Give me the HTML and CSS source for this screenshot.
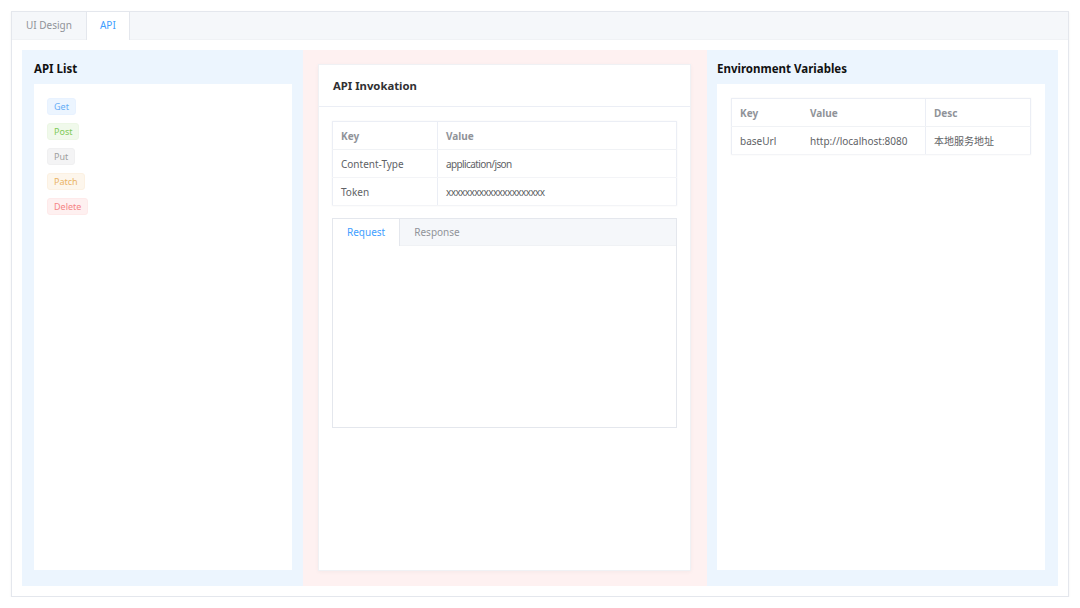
FILE: index.html
```html
<!DOCTYPE html>
<html lang="en">
<head>
    <meta charset="UTF-8">
    <title>API</title>
    <link rel="stylesheet" href="styles.css">
</head>
<body>
    <div class="tabs-card">
        <div class="tabs-header">
            <div class="tab">UI Design</div>
            <div class="tab active">API</div>
        </div>
        <div class="tabs-content">
            <div class="panel panel-list">
                <h3>API List</h3>
                <div class="box">
                    <span class="tag tag-blue">Get</span>
                    <span class="tag tag-green">Post</span>
                    <span class="tag tag-grey">Put</span>
                    <span class="tag tag-orange">Patch</span>
                    <span class="tag tag-red">Delete</span>
                </div>
            </div>
            <div class="panel panel-invoke">
                <div class="card">
                    <div class="card-header">API Invokation</div>
                    <div class="card-body">
                        <table class="grid headers">
                            <tr><th>Key</th><th>Value</th></tr>
                            <tr><td>Content-Type</td><td>application/json</td></tr>
                            <tr><td>Token</td><td>xxxxxxxxxxxxxxxxxxxxx</td></tr>
                        </table>
                        <div class="sub-tabs">
                            <div class="sub-tabs-header">
                                <div class="sub-tab active">Request</div>
                                <div class="sub-tab">Response</div>
                            </div>
                            <div class="sub-tabs-body"></div>
                        </div>
                    </div>
                </div>
            </div>
            <div class="panel panel-env">
                <h3>Environment Variables</h3>
                <div class="box">
                    <table class="grid env">
                        <tr><th>Key</th><th>Value</th><th class="sep">Desc</th></tr>
                        <tr><td>baseUrl</td><td>http://localhost:8080</td><td class="sep">本地服务地址</td></tr>
                    </table>
                </div>
            </div>
        </div>
    </div>
</body>
</html>
```

FILE: styles.css
```css
body { margin: 0; background: #fff; font-family: "Noto Sans", "Noto Sans CJK SC", sans-serif; color: #606266; }
.tabs-card { margin: 11px 0 0 11px; width: 1056px; height: 584px; border: 1px solid #e4e7ed; box-shadow: 0 1px 2px rgba(0,0,0,0.06); display: flex; flex-direction: column; }
.tabs-header { display: flex; height: 27px; background: #f5f7fa; border-bottom: 1px solid #f0f2f5; }
.tab { padding: 0 14px; font-size: 10px; line-height: 27px; color: #909399; }
.tab.active { background: #fff; color: #409eff; border-left: 1px solid #e4e7ed; border-right: 1px solid #e4e7ed; padding: 0 13px; height: 28px; }
.tabs-content { flex: 1; padding: 10px 11px 10px 10px; display: grid; grid-template-columns: 281px 404px 351px; }
.panel { display: flex; flex-direction: column; }
.panel h3 { margin: 0 0 6px; font-size: 11.5px; line-height: 18px; color: #111; font-weight: bold; }
.panel-list { background: #ecf5fe; padding: 10px 11px 16px 12px; }
.panel-env { background: #ecf5fe; padding: 10px 13px 16px 10px; }
.panel-invoke { background: #fef1f1; padding: 14px 16px 15px 15px; }
.box { flex: 1; background: #fff; padding: 14px 13px; display: flex; flex-direction: column; align-items: flex-start; gap: 8px; }
.panel-env .box { padding: 14px; }
.tag { display: inline-block; font-size: 9px; line-height: 15px; padding: 0 6px; border-radius: 3px; border: 1px solid; }
.tag-blue { background: #ecf5ff; border-color: #e8f2ff; color: #66adf6; }
.tag-green { background: #f0f9eb; border-color: #ecf7e5; color: #7fcb58; }
.tag-grey { background: #f4f4f5; border-color: #f0f0f1; color: #a0a0a0; }
.tag-orange { background: #fdf6ec; border-color: #fcf1e2; color: #eab366; }
.tag-red { background: #fef0f0; border-color: #feeaea; color: #f58585; }
.card { flex: 1; background: #fff; border: 1px solid #f0f1f4; box-shadow: 0 1px 4px rgba(0,0,0,0.04); display: flex; flex-direction: column; }
.card-header { height: 41px; line-height: 41px; padding: 0 14px; font-size: 11.3px; font-weight: bold; color: #303133; border-bottom: 1px solid #ebeef5; }
.card-body { padding: 14px 13px; }
.grid { width: 100%; border-collapse: collapse; font-size: 10px; border: 1px solid #ebeef5; box-shadow: 0 0 2px rgba(0,0,0,0.04); }
.grid th { text-align: left; color: #909399; font-weight: bold; height: 27px; padding: 0 8px; border-bottom: 1px solid #f0f2f5; }
.grid td { height: 27px; padding: 0 8px; border-bottom: 1px solid #f3f4f7; color: #606266; }
.headers th:first-child, .headers td:first-child { width: 88px; border-right: 1px solid #ebeef5; }
.headers td:last-child { letter-spacing: -0.6px; }
.env th:first-child { width: 54px; }
.env th:nth-child(2) { width: 107px; }
.env .sep { border-left: 1px solid #ebeef5; }
.sub-tabs { margin-top: 12px; height: 208px; border: 1px solid #e4e7ed; display: flex; flex-direction: column; }
.sub-tabs-header { display: flex; height: 26px; background: #f5f7fa; border-bottom: 1px solid #f0f2f5; }
.sub-tab { padding: 0 14px; font-size: 10px; line-height: 26px; color: #909399; }
.sub-tab.active { background: #fff; color: #409eff; border-right: 1px solid #e4e7ed; height: 27px; }
.sub-tabs-body { flex: 1; }
```
